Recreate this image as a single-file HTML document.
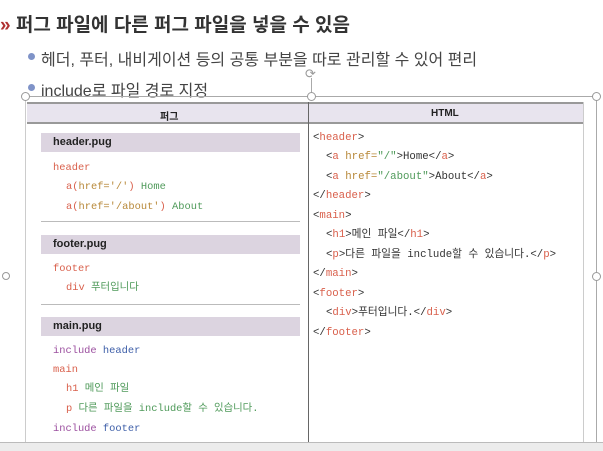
<!DOCTYPE html>
<html><head><meta charset="utf-8"><style>
*{margin:0;padding:0;box-sizing:border-box}
body{width:603px;height:451px;background:#fff;position:relative;overflow:hidden;font-family:"Liberation Sans","Noto Sans CJK KR",sans-serif}
.a{position:absolute;white-space:nowrap}
.m{font-family:"Liberation Mono","Noto Sans CJK KR",monospace;font-size:10.4px;line-height:12px}
.rt{font-size:10.7px}
.r{color:#d9604c}.g{color:#4f9a5a}.y{color:#b8893a}.p{color:#9b4f9f}.b{color:#3d5ea8}.k{color:#333}
.bar{position:absolute;left:41px;width:259px;height:19px;background:#dcd4e0}
.bar span{position:absolute;left:12px;top:3px;font-size:11px;font-weight:bold;color:#222}
.sep{position:absolute;left:41px;width:259px;height:1px;background:#bbb}
.h{position:absolute;width:9px;height:9px;border:1px solid #999;border-radius:50%;background:#fff}
</style></head><body>
<div class="a" style="left:0;top:10px;font-size:19px;font-weight:bold;color:#333"><span style="color:#b03030">»</span> 퍼그 파일에 다른 퍼그 파일을 넣을 수 있음</div>
<div class="a" style="left:28px;top:53px;width:7px;height:7px;border-radius:50%;background:#7f93c8"></div>
<div class="a" style="left:41px;top:46px;font-size:16px;color:#444">헤더, 푸터, 내비게이션 등의 공통 부분을 따로 관리할 수 있어 편리</div>
<div class="a" style="left:28px;top:84px;width:7px;height:7px;border-radius:50%;background:#7f93c8"></div>
<div class="a" style="left:41px;top:77px;font-size:16px;color:#444">include로 파일 경로 지정</div>
<div class="a" style="left:25px;top:96px;width:571px;height:1px;background:#aaa"></div>
<div class="a" style="left:311px;top:78px;width:1px;height:18px;background:#aaa"></div>
<div class="a" style="left:305px;top:66px;font-size:13px;color:#999">⟳</div>
<div class="a" style="left:596px;top:96px;width:1px;height:355px;background:#aaa"></div>
<div class="a" style="left:25px;top:96px;width:1px;height:355px;background:#ccc"></div>
<div class="h" style="left:21px;top:92px"></div><div class="h" style="left:307px;top:92px"></div><div class="h" style="left:592px;top:92px"></div>
<div class="h" style="left:2px;top:272px;width:8px;height:8px"></div><div class="h" style="left:592px;top:272px"></div>
<div class="a" style="left:27px;top:102px;width:557px;height:22px;background:#e8e4ee;border-top:2px solid #999;border-bottom:2px solid #999"></div>
<div class="a" style="left:160px;top:108px;font-size:10px;font-weight:bold;color:#222">퍼그</div>
<div class="a" style="left:431px;top:108px;font-size:10px;font-weight:bold;color:#222">HTML</div>
<div class="a" style="left:308px;top:102px;width:1px;height:340px;background:#666"></div>
<div class="a" style="left:583px;top:102px;width:1px;height:340px;background:#ccc"></div>
<div class="bar" style="top:133px"><span>header.pug</span></div>
<div class="a m r" style="left:53px;top:162px">header</div>
<div class="a m" style="left:66px;top:181px"><span class="r">a(</span><span class="y">href='/'</span><span class="r">)</span> <span class="g">Home</span></div>
<div class="a m" style="left:66px;top:201px"><span class="r">a(</span><span class="y">href='/about'</span><span class="r">)</span> <span class="g">About</span></div>
<div class="sep" style="top:221px"></div>
<div class="bar" style="top:235px"><span>footer.pug</span></div>
<div class="a m r" style="left:53px;top:263px">footer</div>
<div class="a m" style="left:66px;top:282px"><span class="r">div</span> <span class="g">푸터입니다</span></div>
<div class="sep" style="top:304px"></div>
<div class="bar" style="top:317px"><span>main.pug</span></div>
<div class="a m" style="left:53px;top:345px"><span class="p">include</span> <span class="b">header</span></div>
<div class="a m r" style="left:53px;top:364px">main</div>
<div class="a m" style="left:66px;top:383px"><span class="r">h1</span> <span class="g">메인 파일</span></div>
<div class="a m" style="left:66px;top:403px"><span class="r">p</span> <span class="g">다른 파일을 include할 수 있습니다.</span></div>
<div class="a m" style="left:53px;top:423px"><span class="p">include</span> <span class="b">footer</span></div>
<div class="a m rt k" style="left:313px;top:132px">&lt;<span class="r">header</span>&gt;</div>
<div class="a m rt k" style="left:326px;top:151px">&lt;<span class="r">a</span> <span class="y">href=</span><span class="g">"/"</span>&gt;Home&lt;/<span class="r">a</span>&gt;</div>
<div class="a m rt k" style="left:326px;top:171px">&lt;<span class="r">a</span> <span class="y">href=</span><span class="g">"/about"</span>&gt;About&lt;/<span class="r">a</span>&gt;</div>
<div class="a m rt k" style="left:313px;top:190px">&lt;/<span class="r">header</span>&gt;</div>
<div class="a m rt k" style="left:313px;top:210px">&lt;<span class="r">main</span>&gt;</div>
<div class="a m rt k" style="left:326px;top:229px">&lt;<span class="r">h1</span>&gt;메인 파일&lt;/<span class="r">h1</span>&gt;</div>
<div class="a m rt k" style="left:326px;top:249px">&lt;<span class="r">p</span>&gt;다른 파일을 include할 수 있습니다.&lt;/<span class="r">p</span>&gt;</div>
<div class="a m rt k" style="left:313px;top:268px">&lt;/<span class="r">main</span>&gt;</div>
<div class="a m rt k" style="left:313px;top:288px">&lt;<span class="r">footer</span>&gt;</div>
<div class="a m rt k" style="left:326px;top:307px">&lt;<span class="r">div</span>&gt;푸터입니다.&lt;/<span class="r">div</span>&gt;</div>
<div class="a m rt k" style="left:313px;top:327px">&lt;/<span class="r">footer</span>&gt;</div>
<div class="a" style="left:0;top:442px;width:603px;height:9px;background:#ececec;border-top:1px solid #bbb"></div>
</body></html>
